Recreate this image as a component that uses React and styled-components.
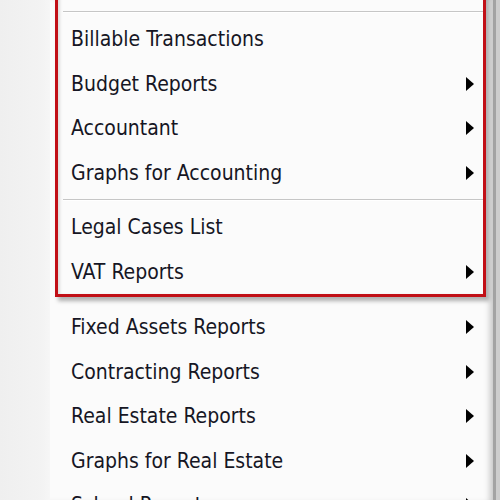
import styled, { createGlobalStyle } from "styled-components";

const GlobalStyle = createGlobalStyle`
    html, body {
        margin: 0;
        padding: 0;
        background: #d2d2d2;
        overflow: hidden;
    }
`;

const topGroup = [
    { label: "Billable Transactions", sub: false },
    { label: "Budget Reports", sub: true },
    { label: "Accountant", sub: true },
    { label: "Graphs for Accounting", sub: true },
];

const midGroup = [
    { label: "Legal Cases List", sub: false },
    { label: "VAT Reports", sub: true },
];

const restGroup = [
    { label: "Fixed Assets Reports", sub: true },
    { label: "Contracting Reports", sub: true },
    { label: "Real Estate Reports", sub: true },
    { label: "Graphs for Real Estate", sub: true },
    { label: "School Reports", sub: true },
];

export default function App() {
    return (
        <>
            <GlobalStyle />
            <Page>
                <Gutter />
                <Menu>
                    <Highlight>
                        <TopTail />
                        <Separator />
                        {topGroup.map(i => <MenuItem key={i.label} {...i} />)}
                        <Separator />
                        {midGroup.map(i => <MenuItem key={i.label} {...i} />)}
                    </Highlight>
                    <Rest>
                        {restGroup.map(i => <MenuItem key={i.label} {...i} />)}
                    </Rest>
                </Menu>
                <Outside />
            </Page>
        </>
    );
}

function MenuItem({ label, sub }) {
    return (
        <Item>
            <span>{label}</span>
            {sub && <Arrow />}
        </Item>
    );
}

const Page = styled.div`
    display: flex;
    width: 500px;
    height: 500px;
    overflow: hidden;
`;

const Gutter = styled.div`
    width: 50px;
    flex-shrink: 0;
    background: linear-gradient(to right, #efefef, #f3f3f3 85%, #f6f6f6);
`;

const Menu = styled.div`
    flex: 1;
    display: flex;
    flex-direction: column;
    background: #fbfbfb;
    border-right: 3px solid #a3a3a3;
    box-shadow: inset -7px 0 6px -4px rgba(0, 0, 0, 0.22);
`;

const Outside = styled.div`
    width: 4px;
    flex-shrink: 0;
    background: #cdcdcd;
`;

const Item = styled.div`
    height: 44.5px;
    flex-shrink: 0;
    display: flex;
    align-items: center;
    justify-content: space-between;
    padding: 0 19px 0 21px;
    font-family: "DejaVu Sans Condensed", "DejaVu Sans", sans-serif;
    font-stretch: condensed;
    font-size: 21px;
    color: #161624;
    white-space: nowrap;
`;

const Arrow = styled.span`
    width: 0;
    height: 0;
    border-left: 8px solid #000;
    border-top: 7px solid transparent;
    border-bottom: 7px solid transparent;
`;

const Highlight = styled.div`
    margin: -13px 7px 0 5px;
    border: 3px solid #c10f16;
    background: #fbfbfb;
    box-shadow: 3px 4px 4px rgba(0, 0, 0, 0.3), inset 3px 0 3px -1px rgba(0, 0, 0, 0.12);

    ${Item} {
        padding: 0 9px 0 13px;
    }
`;

const TopTail = styled.div`
    height: 17px;
`;

const Separator = styled.div`
    height: 1px;
    background: #c6c6c6;
    border-bottom: 1px solid #ffffff;
    margin: 4px 0 4px 5px;
`;

const Rest = styled.div`
    margin-top: 8px;
    display: flex;
    flex-direction: column;
`;
